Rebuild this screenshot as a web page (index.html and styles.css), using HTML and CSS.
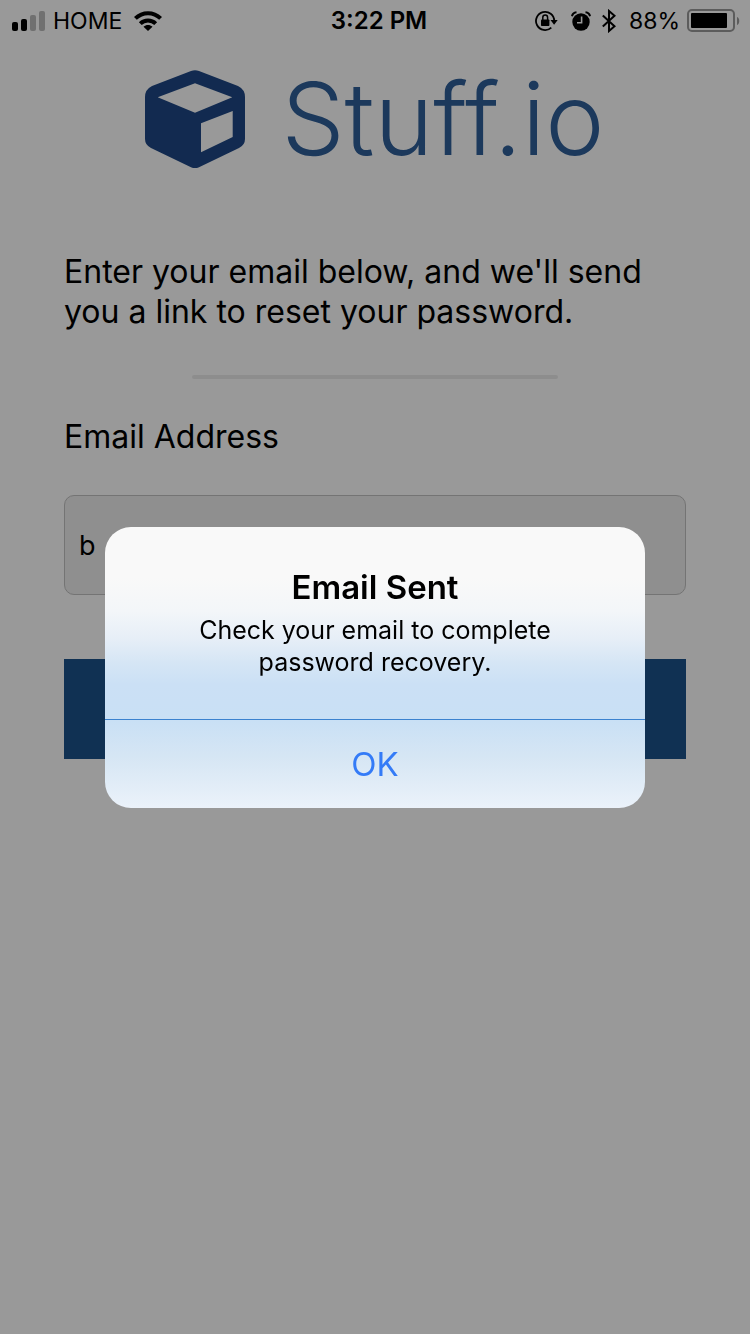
FILE: index.html
```html
<!DOCTYPE html>
<html lang="en">
<head>
<meta charset="utf-8">
<meta name="viewport" content="width=device-width, initial-scale=1">
<title>Stuff.io</title>
<link rel="stylesheet" href="styles.css">
</head>
<body>
<header class="status">
  <div class="status-group">
    <svg class="icon" width="34" height="20" viewBox="0 0 34 20" aria-hidden="true">
      <rect x="0" y="11" width="6" height="9" rx="2"/>
      <rect x="9" y="8" width="6" height="12" rx="2"/>
      <g fill="#bbb"><rect x="18" y="4" width="6" height="16" rx="2"/><rect x="27" y="0" width="6" height="20" rx="2"/></g>
    </svg>
    <span class="carrier">HOME</span>
    <svg class="icon" width="28" height="20" viewBox="0 0 28 20" aria-hidden="true">
      <g fill="none" stroke="#000" stroke-width="4"><path d="M1.400 7.400C8.500.4 19.500.4 26.600 7.400"/><path d="M6.300 12.600C10.500 8.400 17.500 8.400 21.700 12.600"/></g>
      <path d="M9.500 15.800C12.200 13.300 15.800 13.300 18.500 15.800L14 20Z"/>
    </svg>
  </div>
  <time class="time">3:22 PM</time>
  <div class="status-group status-end">
    <svg class="icon" width="23" height="22" viewBox="0 0 23 22" aria-hidden="true">
      <path fill="none" stroke="#000" stroke-width="1.800" d="M19.200 11.500V11A9.100 9.100 0 1 0 16.300 17.600"/>
      <path d="M15.500 10h7.200l-3.600 4.800z"/>
      <rect x="6" y="9.500" width="8.400" height="6.500" rx=".8"/>
      <path fill="none" stroke="#000" stroke-width="1.500" d="M7.800 10V7.500a2.400 2.400 0 0 1 4.800 0V10"/>
    </svg>
    <svg class="icon alarm" width="20" height="20" viewBox="0 0 20 20" aria-hidden="true">
      <circle cx="10" cy="11" r="8.700"/>
      <path fill="none" stroke="#000" stroke-width="2" d="M1 5.200C1.400 3 3.200 1.400 5.500 1.200M14.500 1.200C16.800 1.400 18.600 3 19 5.200"/>
      <path fill="none" stroke="#fff" stroke-width="1.600" d="M10.600 5.500V11.700H6"/>
    </svg>
    <svg class="icon bluetooth" width="14" height="24" viewBox="0 0 14 24" aria-hidden="true">
      <path fill="none" stroke="#000" stroke-width="2" d="M.8 6.500L12.500 17.200L7 22V2L12.500 6.800L.8 17.500"/>
    </svg>
    <span>88%</span>
    <svg class="icon" width="53" height="24" viewBox="0 0 53 24" aria-hidden="true">
      <rect x="1" y="1" width="46" height="21" rx="4" fill="none" stroke="#999" stroke-width="2"/>
      <rect x="4" y="4" width="36" height="15" rx="1"/>
      <path fill="#999" d="M50 8c3 1 3 7 0 8z"/>
    </svg>
  </div>
</header>
<main class="page">
  <h1 class="brand">
    <svg class="brand-mark" width="100" height="98" viewBox="0 0 100 98" aria-hidden="true">
      <path fill="#1e4785" fill-rule="evenodd" d="M46 1Q50-.600 54 1L93 16Q100 19.500 100 27V69Q100 75 94 78L54 97.300Q50 99 46 97.300L6 78Q0 75 0 69V27Q0 19.500 7 16ZM12.700 27.300L50 42.700L87.300 27.300L50 13.300ZM56 53.300V82.300L87.700 67V41Z"/>
    </svg>
    <span>Stuff.io</span>
  </h1>
  <p class="intro">Enter your email below, and we'll send you a link to reset your password.</p>
  <hr class="rule">
  <form class="form">
    <label class="label" for="email">Email Address</label>
    <input class="field" id="email" type="text" value="b">
    <button class="submit" type="button" aria-label="Send"></button>
  </form>
</main>
<div class="overlay">
  <section class="alert" role="alertdialog" aria-labelledby="alert-title" aria-describedby="alert-text">
    <div class="alert-body">
      <h2 class="alert-title" id="alert-title">Email Sent</h2>
      <p class="alert-text" id="alert-text">Check your email to complete password recovery.</p>
    </div>
    <button class="alert-ok" type="button">OK</button>
  </section>
</div>
</body>
</html>
```
FILE: styles.css
```css
* { box-sizing: border-box; }
body {
  margin: 0;
  min-height: 100vh;
  background: #fff;
  color: #000;
  font-family: Inter, "Liberation Sans", sans-serif;
}
.status {
  display: grid;
  grid-template-columns: 1fr auto 1fr;
  align-items: center;
  height: 41px;
  padding: 0 10px 0 12px;
  font-size: 23px;
}
.status-group { display: flex; align-items: center; gap: 7px; }
.status-end { justify-content: flex-end; }
.carrier { margin-right: 5px; }
.time { padding-left: 6px; font-size: 24px; font-weight: 600; }
.icon { flex: none; }
.alarm { margin-left: 6px; }
.bluetooth { margin: 0 6px 0 4px; }
.page { padding: 29px 64px; }
.brand {
  display: flex;
  align-items: center;
  justify-content: center;
  gap: 36px;
  margin: 0;
  height: 98px;
  color: #2f5f99;
  font-size: 100px;
  font-weight: 300;
  line-height: 98px;
}
.intro { margin: 84px 0 43px; font-size: 32px; line-height: 40px; }
.rule {
  width: 366px;
  max-width: 100%;
  height: 4px;
  margin: 0 auto 38px;
  border: 0;
  border-radius: 2px;
  background: #ebebeb;
}
.form { display: flex; flex-direction: column; }
.label { font-size: 32px; line-height: 40px; }
.field {
  height: 100px;
  margin: 38px 0 64px;
  padding: 0 14px;
  border: 1px solid #c1c1c1;
  border-radius: 10px;
  background: #eee;
  color: #000;
  font: inherit;
  font-size: 27px;
}
.submit { height: 100px; border: 0; background: #1c528a; }
.overlay {
  position: fixed;
  inset: 0;
  display: flex;
  align-items: center;
  justify-content: center;
  background: rgba(0, 0, 0, 0.4);
}
.alert {
  width: 540px;
  max-width: 90%;
  overflow: hidden;
  border-radius: 26px;
  background: linear-gradient(#f9f9f9 0%, #f9f9f9 18%, #f3f6f9 30%, #e6eef7 40%, #d6e6f5 48%, #cbe0f5 56%, #c9e0f5 69%, #d6e6f4 82%, #ebf2fa 100%);
  text-align: center;
}
.alert-body { padding: 40px 64px 41px; }
.alert-title { margin: 0 0 7px; font-size: 33px; font-weight: 600; line-height: 40px; }
.alert-text { margin: 0; font-size: 25px; line-height: 32px; }
.alert-ok {
  display: block;
  width: 100%;
  height: 89px;
  border: 0;
  border-top: 1px solid #3b82cf;
  background: none;
  color: #347bf7;
  font: inherit;
  font-size: 33px;
}
```
